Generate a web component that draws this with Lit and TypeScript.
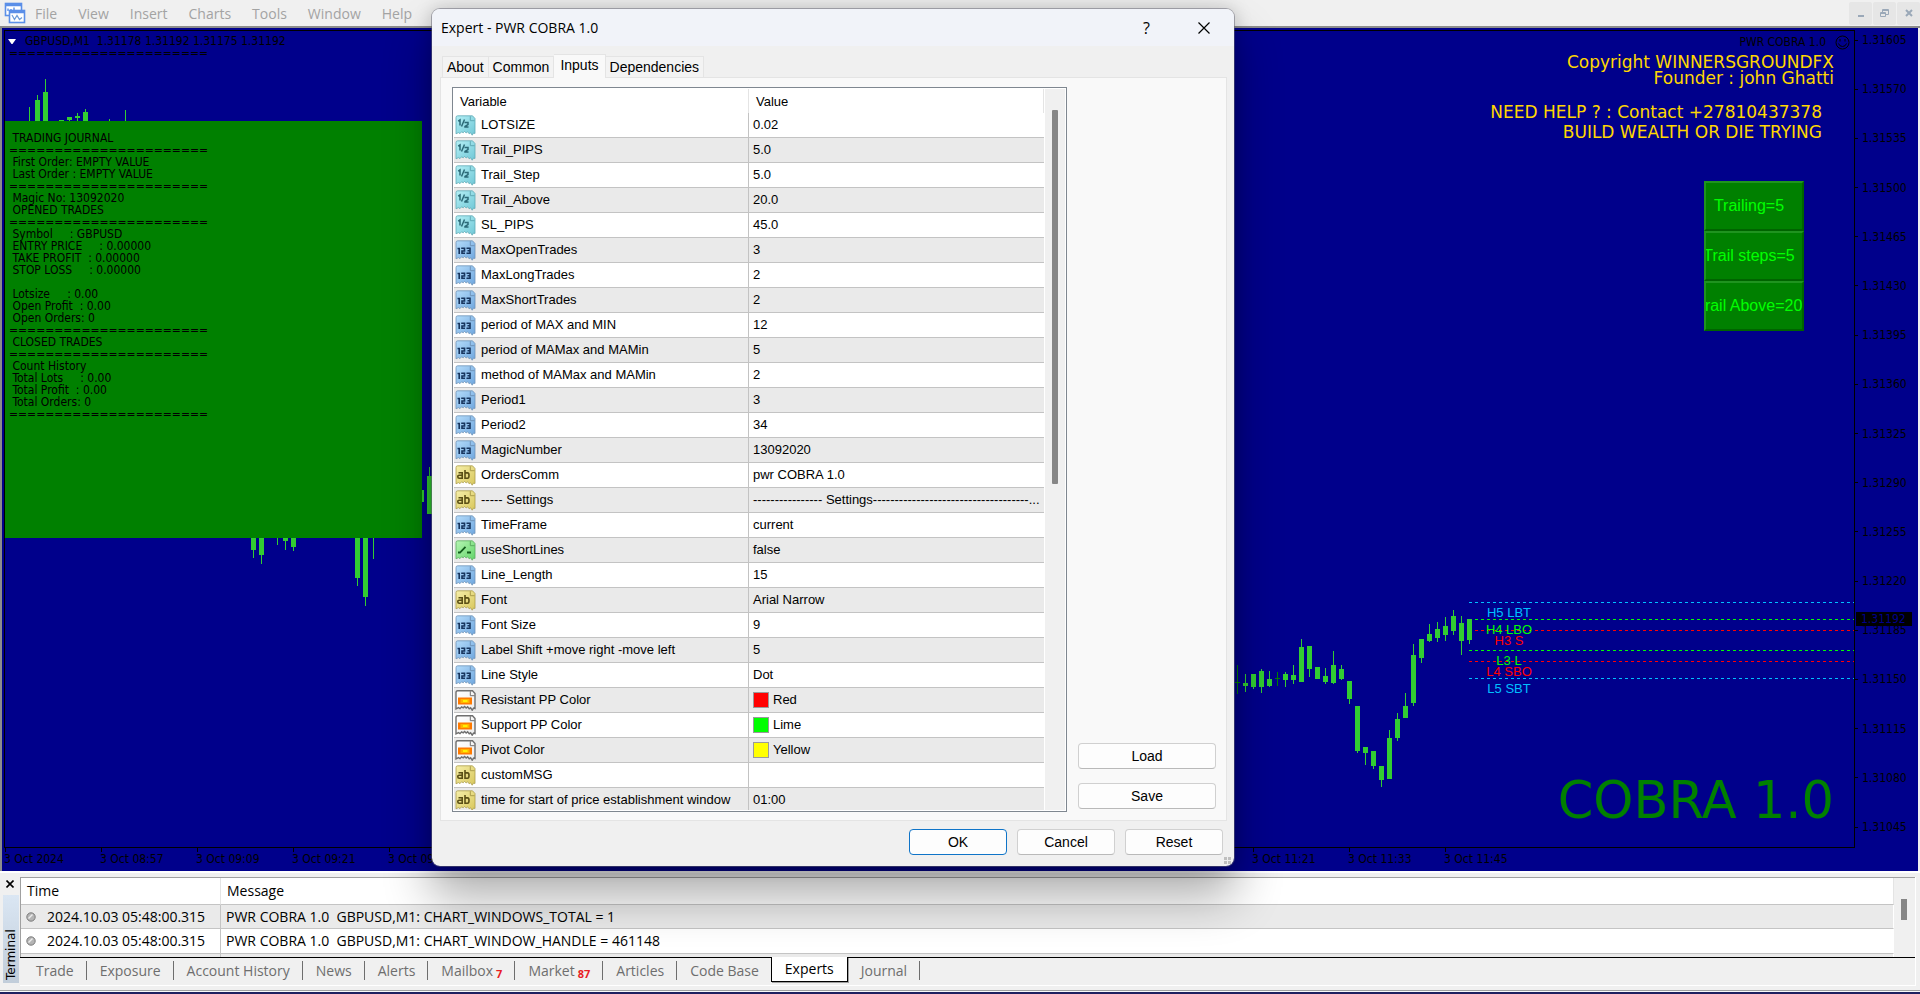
import { LitElement, html, svg, css, nothing } from "lit";
import { customElement, state } from "lit/decorators.js";

const base = css`
  * { box-sizing: border-box; }
  button {
    margin: 0;
    padding: 0;
    border: 0;
    background: none;
    color: inherit;
    font: inherit;
    cursor: default;
  }
  table { border-collapse: separate; border-spacing: 0; table-layout: fixed; }
  th { font-weight: normal; text-align: left; }
`;

/* ------------------------------------------------------------------ chart */

// centre x, wick top, wick bottom, body top, body bottom
type Candle = [number, number, number, number?, number?];

const candles: Candle[] = [
  [29, 107, 130], [37, 95, 130, 100, 130], [45, 79, 130, 92, 130],
  [61, 120, 130, 120, 130], [69, 117, 122, 117, 120], [77, 113, 122, 116, 118],
  [85, 109, 130, 112, 130], [109, 119, 130], [125, 110, 130],
  [253, 530, 558, 530, 550], [261, 530, 564, 530, 555], [277, 530, 545],
  [285, 530, 550, 530, 541], [293, 530, 551, 530, 547],
  [357, 530, 586, 530, 578], [365, 530, 606, 530, 597], [373, 530, 559],
  [421, 490, 502, 490, 502], [429, 467, 514, 476, 514],
  [1245, 674, 692, 683, 686], [1253, 674, 689, 674, 687],
  [1261, 669, 693, 671, 687], [1269, 671, 687, 679, 686],
  [1285, 672, 687, 674, 680], [1293, 665, 684, 675, 680],
  [1301, 639, 682, 647, 682], [1309, 646, 677, 646, 669],
  [1317, 667, 679, 667, 679], [1325, 668, 684, 676, 682],
  [1333, 651, 684, 665, 683], [1341, 665, 680, 669, 679],
  [1349, 681, 704, 681, 699], [1357, 706, 753, 706, 751],
  [1365, 747, 765, 747, 753], [1373, 751, 769, 751, 766],
  [1381, 766, 787, 766, 780], [1389, 730, 779, 738, 779],
  [1397, 713, 741, 719, 738], [1405, 693, 718, 706, 718],
  [1413, 644, 706, 655, 703], [1421, 639, 663, 639, 658],
  [1429, 624, 642, 634, 641], [1437, 622, 642, 629, 638],
  [1445, 617, 641, 626, 635], [1453, 610, 635, 616, 631],
  [1461, 616, 655, 623, 641], [1469, 619, 644, 619, 640],
];
// centre x, wick top, wick bottom, open level
const dojis = [[1237, 665, 694, 682], [1277, 672, 686, 678]];

const pivots = [
  { name: "H5 LBT", y: 602, x: 1469, color: "#00bfff" },
  { name: "H4 LBO", y: 619, x: 1475, color: "#00ff00" },
  { name: "H3 S", y: 630, x: 1475, color: "#ff0000" },
  { name: "L3 L", y: 650, x: 1469, color: "#00ff00" },
  { name: "L4 SBO", y: 661, x: 1469, color: "#ff0000" },
  { name: "L5 SBT", y: 678, x: 1469, color: "#00bfff" },
];

const rule = "======================";
const journal = [
  " TRADING JOURNAL", rule, " First Order: EMPTY VALUE", " Last Order : EMPTY VALUE", rule,
  " Magic No: 13092020", " OPENED TRADES", rule,
  " Symbol     : GBPUSD", " ENTRY PRICE     : 0.00000", " TAKE PROFIT  : 0.00000",
  " STOP LOSS     : 0.00000", "", " Lotsize     : 0.00", " Open Profit  : 0.00",
  " Open Orders: 0", rule, " CLOSED TRADES", rule, " Count History",
  " Total Lots     : 0.00", " Total Profit  : 0.00", " Total Orders: 0", rule,
].join("\n");

const prices = Array.from({ length: 17 }, (_, i) => (1.31605 - i * 0.00035).toFixed(5));
const times = [
  "3 Oct 2024", "3 Oct 08:57", "3 Oct 09:09", "3 Oct 09:21", "3 Oct 09:33",
  "", "", "", "", "", "", "", "", "3 Oct 11:21", "3 Oct 11:33", "3 Oct 11:45",
];

@customElement("chart-pane")
export class ChartPane extends LitElement {
  static styles = [base, css`
    :host {
      flex: 1;
      min-height: 0;
      display: grid;
      grid-template: 1fr 23px / 1fr 63px;
      margin-right: 2px;
      padding: 2px 0 0 2px;
      border-left: 2px solid #8c8c8c;
      background: #00008b;
      color: #000;
      font: 12px/12px "DejaVu Sans Condensed", "DejaVu Sans", sans-serif;
    }
    .plot {
      position: relative;
      overflow: hidden;
      border: 1px solid #000;
      display: flex;
      justify-content: space-between;
      align-items: flex-start;
    }
    .canvas { position: absolute; inset: 0; width: 100%; height: 100%; }
    .candle { fill: #32cd32; }
    .doji { fill: #008000; }
    .pivot { font: 13px "Liberation Sans Narrow", "Liberation Sans", sans-serif; }
    .left { position: relative; width: 417px; }
    .symbol { display: flex; align-items: center; gap: 9px; height: 12px; margin: 4px 0 0 3px; white-space: pre; }
    .caption { margin: 0; padding: 0 4px; white-space: pre; font: inherit; }
    .journal { margin: 62px 0 0; height: 417px; padding: 11px 4px; background: #008000; white-space: pre; font: inherit; }
    .right { position: relative; display: flex; flex-direction: column; align-items: flex-end; align-self: stretch; }
    .expert { display: flex; align-items: center; gap: 9px; height: 16px; margin: 3px 4px 0 0; }
    .credits { margin: 4px 20px 0 0; text-align: right; color: #ffd700; font: 17px/16px "DejaVu Sans", sans-serif; }
    .contact { margin: 16px 32px 0 0; text-align: right; color: #ffd700; font: 17px/20px "DejaVu Sans", sans-serif; }
    .trail { width: 100px; margin: 39px 50px 0 0; }
    .trail button {
      display: flex;
      align-items: center;
      justify-content: center;
      width: 100%;
      height: 50px;
      padding-right: 10px;
      overflow: hidden;
      white-space: nowrap;
      border: 2px solid;
      border-color: #1f931f #006400 #006400 #1f931f;
      background: #008000;
      color: #00ff00;
      font: 16px "Liberation Sans", sans-serif;
    }
    .brand { margin: auto 20px 16px 0; color: #008000; font: 51px/60px "DejaVu Sans", sans-serif; }
    .prices { position: relative; display: flex; flex-direction: column; justify-content: space-between; margin: 4px 0 15px; }
    .price { display: flex; align-items: center; gap: 4px; }
    .price::before { content: ""; width: 3px; height: 1px; background: #000; }
    .bid { position: absolute; left: 1px; top: 578px; padding: 1px 5px; width: 56px; background: #000; color: #00008b; }
    .times { display: grid; grid-auto-flow: column; grid-auto-columns: 96px; overflow: hidden; }
    .time { white-space: nowrap; }
    .time::before { content: ""; display: block; width: 1px; height: 4px; margin: 0 0 1px 1px; background: #000; }
  `];

  render() {
    return html`
      <div class="plot">
        <svg class="canvas" aria-hidden="true">
          <g transform="translate(-5 -31)" shape-rendering="crispEdges">
            ${candles.map(([x, t, b, bt, bb]) => svg`
              <rect class="candle" x=${x} y=${t} width="1" height=${b - t}></rect>
              ${bt !== undefined && bb !== undefined
                ? svg`<rect class="candle" x=${x - 2} y=${bt} width="5" height=${bb - bt}></rect>`
                : nothing}`)}
            ${dojis.map(([x, t, b, o]) => svg`
              <rect class="doji" x=${x} y=${t} width="1" height=${b - t}></rect>
              <rect class="doji" x=${x - 2} y=${o} width="5" height="1"></rect>`)}
            ${pivots.map((p) => svg`
              <line x1=${p.x} x2="4000" y1=${p.y + 0.5} y2=${p.y + 0.5} stroke=${p.color} stroke-dasharray="3 3"></line>`)}
          </g>
          <g transform="translate(-5 -31)">
            ${pivots.map((p) => svg`
              <text class="pivot" x="1509" y=${p.y + 15} text-anchor="middle" fill=${p.color}>${p.name}</text>`)}
          </g>
        </svg>
        <div class="left">
          <div class="symbol">
            <svg width="8" height="5" viewBox="0 0 8 5" aria-hidden="true"><path d="M0 0H8L4.500 5h-1Z" fill="#fff"></path></svg>
            <span>GBPUSD,M1  1.31178 1.31192 1.31175 1.31192</span>
          </div>
          <p class="caption">${rule}</p>
          <pre class="journal">${journal}</pre>
        </div>
        <div class="right">
          <div class="expert">
            <span>PWR COBRA 1.0</span>
            <svg width="15" height="15" viewBox="0 0 15 15" fill="none" stroke="#000" aria-hidden="true">
              <circle cx="7.500" cy="7.500" r="6.500"></circle>
              <path d="M5 4v2.500M10 4v2.500M3.500 8.500Q4.500 11.500 7.500 11.500T11.500 8.500"></path>
            </svg>
          </div>
          <div class="credits">Copyright WINNERSGROUNDFX<br>Founder : john Ghatti</div>
          <div class="contact">NEED HELP ? : Contact +27810437378<br>BUILD WEALTH OR DIE TRYING</div>
          <div class="trail">
            <button type="button">Trailing=5</button>
            <button type="button">Trail steps=5</button>
            <button type="button">Trail Above=20</button>
          </div>
          <div class="brand">COBRA 1.0</div>
        </div>
      </div>
      <div class="prices">
        ${prices.map((p) => html`<span class="price">${p}</span>`)}
        <span class="bid">1.31192</span>
      </div>
      <div class="times">${times.map((t) => html`<span class="time">${t}</span>`)}</div>
    `;
  }
}

/* --------------------------------------------------------------- terminal */

const logRows = [
  ["2024.10.03 05:48:00.315", "PWR COBRA 1.0  GBPUSD,M1: CHART_WINDOWS_TOTAL = 1"],
  ["2024.10.03 05:48:00.315", "PWR COBRA 1.0  GBPUSD,M1: CHART_WINDOW_HANDLE = 461148"],
];
const terminalTabs: [string, number?][] = [
  ["Trade"], ["Exposure"], ["Account History"], ["News"], ["Alerts"], ["Mailbox", 7],
  ["Market", 87], ["Articles"], ["Code Base"], ["Experts"], ["Journal"],
];

@customElement("terminal-panel")
export class TerminalPanel extends LitElement {
  @state() private active = "Experts";

  static styles = [base, css`
    :host {
      box-sizing: border-box;
      flex: none;
      display: grid;
      grid-template: minmax(0, 1fr) / 17px minmax(0, 1fr);
      height: 119px;
      padding: 4px 4px 4px 3px;
      border-top: 2px solid #fff;
      background: #f0f0f0;
      font: 14px/24px "Open Sans", "Noto Sans", sans-serif;
      color: #000;
    }
    .side { display: flex; flex-direction: column; padding: 2px 1px 3px 0; }
    .shut { display: grid; place-items: center; height: 10px; margin: 0 2px 6px 0; }
    .label {
      flex: 1;
      writing-mode: vertical-rl;
      transform: rotate(180deg);
      padding-top: 3px;
      background: linear-gradient(#c1cdda, #dae6f3);
      font: 12px/16px "DejaVu Sans", sans-serif;
      text-align: start;
    }
    .main { display: flex; flex-direction: column; min-width: 0; border: 1px solid #fff; border-width: 0 1px 1px 0; }
    .log { display: flex; align-items: flex-start; flex: 1; min-height: 0; overflow: hidden; border: 1px solid #a0a0a0; border-width: 1px 0 0 1px; }
    table { flex: 1; background: #fff; }
    th, td { padding: 0 0 0 5px; white-space: pre; overflow: hidden; border-bottom: 1px solid #c4c4c4; border-right: 1px solid #c4c4c4; }
    th { height: 27px; padding-left: 6px; border-right-color: #e4e4e4; }
    td { height: 24px; line-height: 22px; }
    tr:nth-child(2) td { height: 25px; line-height: 24px; }
    td:last-child { border-right-color: #fff; }
    tbody tr:nth-child(odd) td { background: #eaeaea; }
    .when { width: 200px; }
    .stamp { display: flex; align-items: center; gap: 11px; height: 23px; }
    .scroll { width: 21px; align-self: stretch; padding: 21px 0 0 7px; background: #f0f0f0; }
    .thumb { width: 6px; height: 21px; background: #868686; }
    .tabs { display: flex; flex: none; height: 28px; border-top: 1px solid #000; padding-left: 3px; color: #6e6e6e; }
    .tab { position: relative; display: flex; align-items: center; padding: 0 13px 2px; }
    .tab::after { content: ""; position: absolute; right: 0; top: 3px; height: 19px; width: 1px; background: #6e6e6e; }
    .tab[aria-selected="true"] {
      height: 25px;
      margin: -1px 0 0 -1px;
      padding-bottom: 0;
      background: #fff;
      color: #000;
      border: 1px solid #000;
      border-top: 0;
      box-shadow: 1px 1px #a0a0a0;
    }
    .tab[aria-selected="true"]::after { content: none; }
    .count { padding: 7px 0 0 3px; color: #e81c24; font-size: 11px; line-height: 16px; font-weight: bold; }
  `];

  render() {
    return html`
      <div class="side">
        <button class="shut" type="button" aria-label="Close">
          <svg width="8" height="8" viewBox="0 0 8 8" stroke="#000" stroke-width="1.600"><path d="M.5 .5L7.500 7.500M7.500 .5L.5 7.500"></path></svg>
        </button>
        <div class="label">Terminal</div>
      </div>
      <div class="main">
        <div class="log">
          <table>
            <colgroup><col class="when"><col></colgroup>
            <thead><tr><th>Time</th><th>Message</th></tr></thead>
            <tbody>
              ${logRows.map(([time, message]) => html`
                <tr>
                  <td><div class="stamp"><svg width="10" height="10" viewBox="0 0 10 10" aria-hidden="true">
                    <circle cx="5" cy="5" r="4.200" fill="#b4b4b4" stroke="#7c7c7c"></circle>
                    <path d="M2.500 6.500L6.500 2.500" stroke="#ececec" stroke-width="1.500"></path>
                  </svg>${time}</div></td>
                  <td>${message}</td>
                </tr>`)}
              <tr><td></td><td></td></tr>
            </tbody>
          </table>
          <div class="scroll"><div class="thumb"></div></div>
        </div>
        <div class="tabs" role="tablist">
          ${terminalTabs.map(([name, count]) => html`
            <button class="tab" type="button" role="tab" aria-selected=${String(name === this.active)}
              @click=${() => { this.active = name; }}>${name}${count ? html`<span class="count">${count}</span>` : nothing}</button>`)}
        </div>
      </div>
    `;
  }
}

/* ----------------------------------------------------------------- dialog */

type Kind = "double" | "int" | "string" | "bool" | "color";
interface Input { kind: Kind; name: string; value: string; swatch?: string; }
const row = (kind: Kind, name: string, value: string, swatch?: string): Input => ({ kind, name, value, swatch });

const inputs: Input[] = [
  row("double", "LOTSIZE", "0.02"),
  row("double", "Trail_PIPS", "5.0"),
  row("double", "Trail_Step", "5.0"),
  row("double", "Trail_Above", "20.0"),
  row("double", "SL_PIPS", "45.0"),
  row("int", "MaxOpenTrades", "3"),
  row("int", "MaxLongTrades", "2"),
  row("int", "MaxShortTrades", "2"),
  row("int", "period of MAX and MIN", "12"),
  row("int", "period of MAMax and MAMin", "5"),
  row("int", "method of MAMax and MAMin", "2"),
  row("int", "Period1", "3"),
  row("int", "Period2", "34"),
  row("int", "MagicNumber", "13092020"),
  row("string", "OrdersComm", "pwr COBRA 1.0"),
  row("string", "----- Settings", "-".repeat(16) + " Settings" + "-".repeat(36) + "..."),
  row("int", "TimeFrame", "current"),
  row("bool", "useShortLines", "false"),
  row("int", "Line_Length", "15"),
  row("string", "Font", "Arial Narrow"),
  row("int", "Font Size", "9"),
  row("int", "Label Shift +move right -move left", "5"),
  row("int", "Line Style", "Dot"),
  row("color", "Resistant PP Color", "Red", "#ff0000"),
  row("color", "Support PP Color", "Lime", "#00ff00"),
  row("color", "Pivot Color", "Yellow", "#ffff00"),
  row("string", "customMSG", ""),
  row("string", "time for start of price establishment window", "01:00"),
];

const tones: Record<Kind, [string, string, string]> = {
  double: ["#b5f0f6", "#6fc7d6", "#5fa9b5"],
  int: ["#b4dcfb", "#6ea6de", "#6f93b8"],
  string: ["#f6efa9", "#d8c75c", "#ab9d4c"],
  bool: ["#b6f6b4", "#62d468", "#5cab60"],
  color: ["#ffffff", "#ececec", "#6f6f6f"],
};

const emblem = (kind: Kind) => {
  switch (kind) {
    case "double":
      return svg`<g fill="none" stroke="#2b6a78" stroke-width="1.500"><path d="M3.200 6.200L5 5V10.500M9.500 4.500L6.500 11.500M9.500 7.500H13V9.500L10 11.500V12H13.500"></path></g>`;
    case "int":
      return svg`<g fill="none" stroke="#17355e" stroke-width="1.600"><path d="M2.500 8.500H4.200V14M6.200 8.300H9.500V11H7V13.300H10M11.500 8.300H15V13.300H11.500M12.500 10.800H15"></path></g>`;
    case "string":
      return svg`<g fill="none" stroke="#5a4f16" stroke-width="1.600"><path d="M3.500 7.700H7.200V13.200H4.200Q2.800 13.200 2.800 11.700T4.200 10.300H7.200M10 5V13.200H12.500Q14 13.200 14 10.500T12.500 7.900H10"></path></g>`;
    case "bool":
      return svg`<g fill="none" stroke="#125c1c" stroke-width="1.800"><path d="M3 12.500H5L10.500 6.800M12 12.500H16"></path></g>`;
    case "color":
      return svg`<rect x="3" y="7.500" width="14" height="7" fill="#ff7a00"></rect><rect x="5.500" y="9" width="9" height="4" fill="#ffb400"></rect><rect x="8" y="10" width="4.500" height="2" fill="#fff000"></rect>`;
  }
};

@customElement("expert-dialog")
export class ExpertDialog extends LitElement {
  @state() private tab = "Inputs";

  static styles = [base, css`
    :host {
      box-sizing: border-box;
      display: flex;
      flex-direction: column;
      width: 804px;
      border: 1px solid rgba(100, 100, 115, 0.5);
      border-radius: 9px;
      overflow: hidden;
      background: #f0f0f0;
      background-clip: padding-box;
      box-shadow: 0 30px 48px rgba(0, 0, 0, 0.32), 0 0 18px rgba(0, 0, 0, 0.18);
      color: #000;
      font: 14px/16px "Liberation Sans", Arial, sans-serif;
    }
    .title { display: flex; align-items: center; height: 37px; padding: 0 2px 0 9px; background: #f1f3f9; font: 14px/20px "Open Sans", "Noto Sans", sans-serif; }
    .name { flex: 1; }
    .sys { width: 57px; height: 37px; display: grid; place-items: center; font-size: 16px; }
    .tabs { display: flex; align-items: flex-end; height: 31px; margin-left: 10px; }
    .tab { height: 21px; padding: 0 4px; background: #f3f3f3; border: 1px solid #e4e4e4; border-width: 1px 1px 0 0; }
    .tab:first-child { border-left-width: 1px; }
    .tab[aria-selected="true"] { position: relative; height: 24px; margin-bottom: -1px; padding: 0 6px 4px; background: #f9f9f9; }
    .page { flex: 1; min-height: 0; display: flex; gap: 11px; margin: 0 7px 0 8px; padding: 9px 10px 8px 11px; background: #f9f9f9; border: 1px solid #e4e4e4; }
    .list { flex: 1; display: flex; gap: 1px; padding: 1px; min-height: 0; overflow: hidden; border: 1px solid #7f8790; background: #fff; }
    .view { flex: 1; overflow: hidden; min-height: 0; }
    table { width: 100%; font: 13px/24px "Liberation Sans", Arial, sans-serif; }
    th { height: 24px; padding: 1px 0 0 7px; line-height: 23px; border-right: 1px solid #e4e4e4; }
    th:first-child { padding-left: 6px; }
    td { height: 25px; padding: 0 0 0 4px; border-bottom: 1px solid #c3c3c3; white-space: pre; overflow: hidden; }
    td:first-child { padding-left: 1px; border-right: 1px solid #c3c3c3; }
    tbody tr:nth-child(even) td { background: #eaeaea; }
    .variable { width: 295px; }
    .cell { display: flex; align-items: center; height: 24px; gap: 5px; }
    .cell svg { flex: none; }
    .swatch { display: flex; align-items: center; gap: 4px; }
    .chip { width: 16px; height: 16px; border: 1px solid #9a9a9a; }
    .scroll { width: 20px; padding: 21px 0 0 7px; background: #f0f0f0; }
    .thumb { width: 6px; height: 374px; background: #868686; border-radius: 1px; }
    .side { width: 138px; display: flex; flex-direction: column; justify-content: flex-end; gap: 14px; padding-bottom: 3px; }
    .btn { height: 26px; background: #fdfdfd; border: 1px solid #d0d0d0; border-bottom-color: #b9b9b9; border-radius: 4px; }
    .btn.main { border-color: #0f74c8; }
    .foot { position: relative; display: flex; justify-content: flex-end; gap: 10px; padding: 8px 11px 11px; }
    .foot .btn { width: 98px; }
    .grip { position: absolute; right: 3px; bottom: 2px; display: block; }
    .defs { position: absolute; width: 0; height: 0; }
  `];

  render() {
    return html`
      <svg class="defs" aria-hidden="true"><defs>
        ${(Object.keys(tones) as Kind[]).map((k) => svg`
          <linearGradient id=${"tone-" + k} x1="0" y1="0" x2="1" y2="1">
            <stop offset="0" stop-color=${tones[k][0]}></stop><stop offset="1" stop-color=${tones[k][1]}></stop>
          </linearGradient>`)}
      </defs></svg>
      <div class="title">
        <span class="name">Expert - PWR COBRA 1.0</span>
        <button class="sys" type="button">?</button>
        <button class="sys" type="button" aria-label="Close">
          <svg width="12" height="12" viewBox="0 0 12 12" stroke="#000" stroke-width="1.200"><path d="M.5 .5L11.500 11.500M11.500 .5L.5 11.500"></path></svg>
        </button>
      </div>
      <div class="tabs" role="tablist">
        ${["About", "Common", "Inputs", "Dependencies"].map((t) => html`
          <button class="tab" type="button" role="tab" aria-selected=${String(t === this.tab)}
            @click=${() => { this.tab = t; }}>${t}</button>`)}
      </div>
      <div class="page">
        <div class="list">
          <div class="view">
            <table>
              <colgroup><col class="variable"><col></colgroup>
              <thead><tr><th>Variable</th><th>Value</th></tr></thead>
              <tbody>
                ${inputs.map((r) => html`
                  <tr>
                    <td><div class="cell">${this.icon(r.kind)}${r.name}</div></td>
                    <td>${r.swatch
                      ? html`<div class="swatch"><span class="chip" style="background:${r.swatch}"></span>${r.value}</div>`
                      : r.value}</td>
                  </tr>`)}
              </tbody>
            </table>
          </div>
          <div class="scroll"><div class="thumb"></div></div>
        </div>
        <div class="side">
          <button class="btn" type="button">Load</button>
          <button class="btn" type="button">Save</button>
        </div>
      </div>
      <div class="foot">
        <button class="btn main" type="button">OK</button>
        <button class="btn" type="button">Cancel</button>
        <button class="btn" type="button">Reset</button>
        <svg class="grip" width="7" height="7" fill="#bfbfbf" aria-hidden="true"><path d="M0 0h3v3H0zM4 0h3v3H4zM0 4h3v3H0zM4 4h3v3H4z"></path></svg>
      </div>
    `;
  }

  private icon(kind: Kind) {
    return html`<svg width="21" height="21" viewBox="0 0 21 21" aria-hidden="true">
      <path fill="url(#tone-${kind})" stroke=${tones[kind][2]} stroke-width=${kind === "color" ? 1.4 : 0.8}
        d="M1 2.500Q1 .800 2.700 .800H17.500L20 3.500V18.500L18.600 18L17.200 20.200L15.600 17.800L14.200 18.800L12.600 16.800L11.200 18L9.600 16.400L8.200 17.800L6.600 16.800L5 18.600L3.500 17.600L1 18.800Z"></path>
      <path fill="none" stroke=${tones[kind][2]} d="M15.300 1.200V5.700H19.600"></path>
      ${emblem(kind)}
    </svg>`;
  }
}

/* -------------------------------------------------------------------- app */

@customElement("app-root")
export class AppRoot extends LitElement {
  static styles = [base, css`
    :host { position: relative; display: flex; flex-direction: column; height: 100vh; overflow: hidden; background: #f0f0f0; }
    .bar {
      flex: none;
      display: flex;
      align-items: center;
      height: 28px;
      padding-left: 4px;
      border-bottom: 2px solid #8c8c8c;
      color: #a3a3a3;
      font: 14px/20px "Open Sans", "Noto Sans", sans-serif;
    }
    .menus { flex: 1; display: flex; gap: 21px; padding: 2px 0 0 9px; }
    .win { display: flex; gap: 1px; }
    .win button { display: grid; place-items: center; width: 23px; height: 23px; background: #e6e6e6; border-radius: 2px; }
    .modal { position: absolute; left: 431px; top: 8px; height: calc(100vh - 135px); }
    .edge { flex: none; height: 4px; border-top: 1px solid #a0a0a0; background: linear-gradient(#fafafa 1px, #1f1f5f 1px); }
  `];

  render() {
    return html`
      <div class="bar">
        <svg width="22" height="22" viewBox="0 0 22 22" fill="none" aria-hidden="true">
          <rect x="1.500" y="1.500" width="16" height="12" fill="#fff" stroke="#5b8fe8" stroke-width="1.600"></rect>
          <path d="M1 3H18" stroke="#5b8fe8" stroke-width="2.500"></path>
          <path d="M4 9V6.500M7 10V7M10 8V5.500" stroke="#5b8fe8" stroke-width="1.400"></path>
          <rect x="5.500" y="8.500" width="15" height="12" fill="#fff" stroke="#5b8fe8" stroke-width="1.600"></rect>
          <path d="M5 10H21" stroke="#5b8fe8" stroke-width="2.500"></path>
          <path d="M8 13L10.500 17.500L13 13.500L15.500 17.500L18 15.500" stroke="#6c9bd8" stroke-width="1.200"></path>
        </svg>
        <div class="menus">
          ${["File", "View", "Insert", "Charts", "Tools", "Window", "Help"].map((m) => html`<button type="button">${m}</button>`)}
        </div>
        <div class="win">
          <button type="button" aria-label="Minimize"><svg width="8" height="8"><rect x="1" y="6" width="6" height="2" fill="#9aa8b8"></rect></svg></button>
          <button type="button" aria-label="Restore"><svg width="9" height="9" fill="none" stroke="#9aa8b8"><path d="M2.500 3V.500H8.500V5.500H6M2 1.500H9M.500 3.500H5.500V7.500H.500ZM.500 4.500H5.500"></path></svg></button>
          <button type="button" aria-label="Close"><svg width="8" height="8" stroke="#9aa8b8" stroke-width="2"><path d="M1 1L7 7M7 1L1 7"></path></svg></button>
        </div>
      </div>
      <chart-pane></chart-pane>
      <terminal-panel></terminal-panel>
      <div class="edge"></div>
      <expert-dialog class="modal" role="dialog" aria-label="Expert - PWR COBRA 1.0"></expert-dialog>
    `;
  }
}
